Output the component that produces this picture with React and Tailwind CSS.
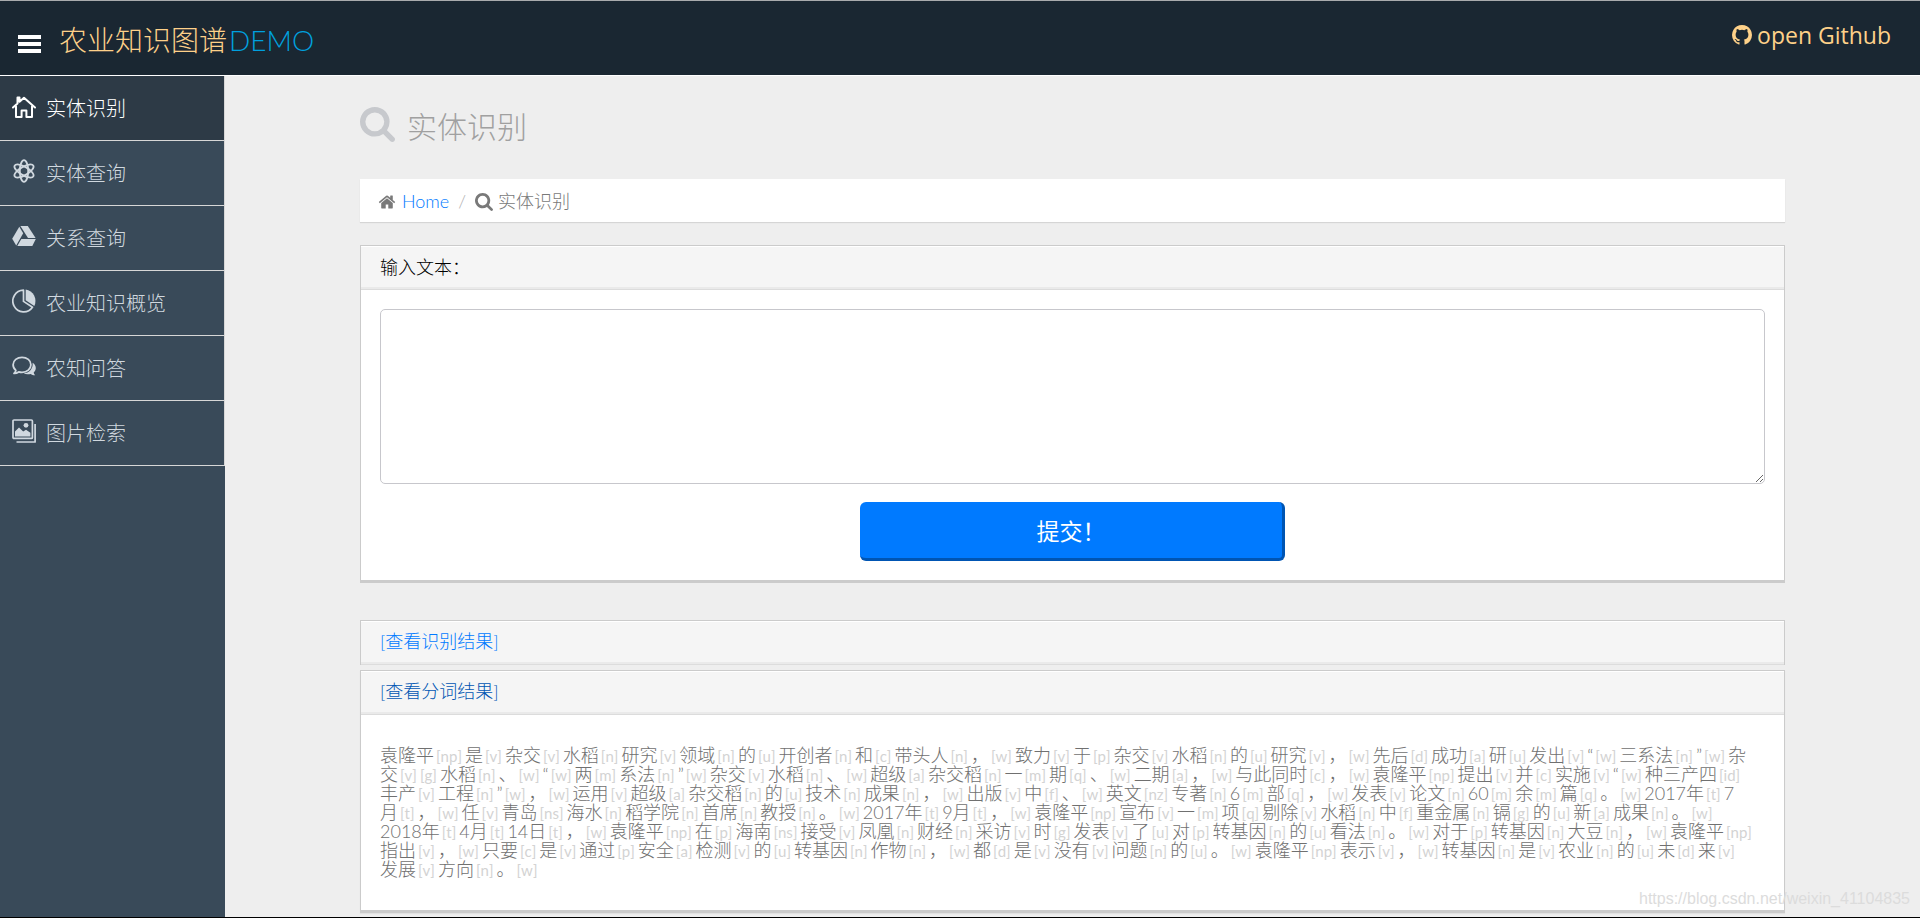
import React from "react";

const HouseIcon = () => (
  <svg viewBox="0 -1 24 24" className="w-6 h-6 -mt-1 shrink-0" fill="none" stroke="currentColor" strokeWidth="2" strokeLinejoin="round" strokeLinecap="round">
    <path d="M1 12.5 5.5 8.6V2.6h2v4.2L12 2.7l11 9.8" />
    <path d="M4 11.5V22h5.6v-6.6h4.8V22H20V11.5" />
  </svg>
);

const AtomIcon = () => (
  <svg viewBox="0 0 24 24" className="w-6 h-6 -mt-1 shrink-0" fill="none" stroke="currentColor" strokeWidth="1.8">
    <ellipse cx="12" cy="12" rx="4.2" ry="10.8" />
    <ellipse cx="12" cy="12" rx="4.2" ry="10.8" transform="rotate(60 12 12)" />
    <ellipse cx="12" cy="12" rx="4.2" ry="10.8" transform="rotate(120 12 12)" />
  </svg>
);

const DriveIcon = () => (
  <svg viewBox="0 0 24 24" className="w-6 h-6 -mt-1 shrink-0" fill="currentColor">
    <path d="M8.400 2h7.400l7.800 12h-7.600z" />
    <path d="M7.300 2.800 11.200 9.200 4.200 21.600.2 14.800z" />
    <path d="M9.300 15h14.500L20.300 22H5.300z" />
  </svg>
);

const PieIcon = () => (
  <svg viewBox="0 0 24 24" className="w-6 h-6 -mt-1 shrink-0">
    <path d="M11.500 1.200a10.800 10.800 0 1 0 9 17L11.500 12.400z" fill="none" stroke="currentColor" strokeWidth="1.7" strokeLinejoin="round" />
    <path d="M13.700.5A11.600 11.600 0 0 1 22.300 17L13.700 11.300z" fill="currentColor" />
  </svg>
);

const ChatIcon = () => (
  <svg viewBox="0 0 24 24" className="w-6 h-6 -mt-1 shrink-0">
    <path d="M10 3.3c-4.8 0-8.9 3.2-8.9 7.4 0 2.4 1.2 4.400 2.800 5.700-.2 1.200-.9 2.200-1.900 3 1.800.1 3.300-.5 4.700-1.500 1 .3 2.100.5 3.300.5 5 0 8.900-3.400 8.900-7.700s-3.900-7.400-8.900-7.400z" fill="none" stroke="currentColor" strokeWidth="1.8" strokeLinejoin="round" />
    <path d="M20.600 8.800c2 1.300 3.200 3.200 3.200 5.300 0 1.800-.8 3.300-2.100 4.500.1 1 .6 1.900 1.500 2.600-1.800.1-3.300-.4-4.600-1.300-2.300.7-4.900.5-7-.4 5.600-.4 9.800-4.800 9-10.700z" fill="currentColor" />
  </svg>
);

const ImagesIcon = () => (
  <svg viewBox="0 0 24 24" className="w-6 h-6 -mt-1 shrink-0" fill="none" stroke="currentColor" strokeWidth="1.7" strokeLinejoin="round">
    <rect x="1" y="1" width="19.400" height="18.400" rx="1" />
    <path d="M23.100 5v18H4.500" />
    <circle cx="14" cy="6.300" r="2.400" fill="currentColor" stroke="none" />
    <path d="M3 12.500 7 8.500l4.200 4 2.800-1.800 4.400 3V17.400H3z" fill="currentColor" stroke="none" />
  </svg>
);

const HomeGlyph = ({ className }) => (
  <svg viewBox="0 0 1792 1792" className={className} fill="currentColor">
    <path d="M1472 992v480q0 26-19 45t-45 19h-384v-384h-256v384h-384q-26 0-45-19t-19-45v-480q0-1 .5-3t.5-3l575-474 575 474q1 2 1 6zm223-69l-62 74q-8 9-21 11h-3q-13 0-21-7l-692-577-692 577q-12 8-24 7-13-2-21-11l-62-74q-8-10-7-23.5t11-21.5l719-599q32-26 76-26t76 26l244 204v-195q0-14 9-23t23-9h192q14 0 23 9t9 23v408l219 182q10 8 11 21.5t-7 23.5z" />
  </svg>
);

const SearchGlyph = ({ className }) => (
  <svg viewBox="64 128 1664 1664" className={className} fill="currentColor">
    <path d="M1216 832q0-185-131.5-316.5t-316.5-131.5-316.5 131.5-131.5 316.5 131.5 316.5 316.5 131.5 316.5-131.5 131.5-316.5zm512 832q0 52-38 90t-90 38q-54 0-90-38l-343-342q-179 124-399 124-143 0-273.5-55.5t-225-150-150-225-55.5-273.5 55.5-273.5 150-225 225-150 273.5-55.5 273.5 55.5 225 150 150 225 55.5 273.5q0 220-124 399l343 343q37 37 37 90z" />
  </svg>
);

const GithubGlyph = ({ className }) => (
  <svg viewBox="128 128 1536 1536" className={className} fill="currentColor">
    <path d="M896 128q209 0 385.5 103t279.5 279.5 103 385.5q0 251-146.5 451.5t-378.5 277.5q-27 5-40-7t-13-30q0-3 .5-76.5t.5-134.5q0-97-52-142 57-6 102.5-18t94-39 81-66.5 53-105 20.5-150.5q0-119-79-206 37-91-8-204-28-9-81 11t-92 44l-38 24q-93-26-192-26t-192 26q-16-11-42.5-27t-83.5-38.5-85-13.5q-45 113-8 204-79 87-79 206 0 85 20.5 150t52.5 105 80.5 67 94 39 102.5 18q-39 36-49 103-21 10-45 15t-57 5-65.5-21.5-55.5-62.5q-19-32-48.5-52t-49.5-24l-20-3q-21 0-29 4.5t-5 11.5 9 14 13 12l7 5q22 10 43.5 38t31.5 51l10 23q13 38 44 61.5t67 30 69.5 7 55.5-3.5l23-4q0 38 .5 88.5t.5 54.5q0 18-13 30t-40 7q-232-77-378.5-277.5t-146.5-451.5q0-209 103-385.5t279.5-279.5 385.5-103z" />
  </svg>
);

const menu = [
  { label: "实体识别", icon: <HouseIcon />, active: true },
  { label: "实体查询", icon: <AtomIcon /> },
  { label: "关系查询", icon: <DriveIcon /> },
  { label: "农业知识概览", icon: <PieIcon /> },
  { label: "农知问答", icon: <ChatIcon /> },
  { label: "图片检索", icon: <ImagesIcon /> },
];

// word/tag pairs, one string per line
const segmented = [
  "袁隆平/np 是/v 杂交/v 水稻/n 研究/v 领域/n 的/u 开创者/n 和/c 带头人/n ，/w 致力/v 于/p 杂交/v 水稻/n 的/u 研究/v ，/w 先后/d 成功/a 研/u 发出/v “/w 三系法/n ”/w 杂",
  "交/v /g 水稻/n 、/w “/w 两/m 系法/n ”/w 杂交/v 水稻/n 、/w 超级/a 杂交稻/n 一/m 期/q 、/w 二期/a ，/w 与此同时/c ，/w 袁隆平/np 提出/v 并/c 实施/v “/w 种三产四/id",
  "丰产/v 工程/n ”/w ，/w 运用/v 超级/a 杂交稻/n 的/u 技术/n 成果/n ，/w 出版/v 中/f 、/w 英文/nz 专著/n 6/m 部/q ，/w 发表/v 论文/n 60/m 余/m 篇/q 。/w 2017年/t 7",
  "月/t ，/w 任/v 青岛/ns 海水/n 稻学院/n 首席/n 教授/n 。/w 2017年/t 9月/t ，/w 袁隆平/np 宣布/v 一/m 项/q 剔除/v 水稻/n 中/f 重金属/n 镉/g 的/u 新/a 成果/n 。/w",
  "2018年/t 4月/t 14日/t ，/w 袁隆平/np 在/p 海南/ns 接受/v 凤凰/n 财经/n 采访/v 时/g 发表/v 了/u 对/p 转基因/n 的/u 看法/n 。/w 对于/p 转基因/n 大豆/n ，/w 袁隆平/np",
  "指出/v ，/w 只要/c 是/v 通过/p 安全/a 检测/v 的/u 转基因/n 作物/n ，/w 都/d 是/v 没有/v 问题/n 的/u 。/w 袁隆平/np 表示/v ，/w 转基因/n 是/v 农业/n 的/u 未/d 来/v",
  "发展/v 方向/n 。/w",
];

const Token = ({ token }) => {
  const [word, tag] = token.split("/");
  return (
    <span className="mr-[3px]">
      {word && <span className="mr-0.5">{word}</span>}
      {tag && <small className="text-[15px] leading-none font-normal text-[#d3d3d3]">[{tag}]</small>}
    </span>
  );
};

const PanelHeader = ({ children }) => (
  <div className="h-11 px-[19px] flex items-center bg-[#f5f5f5] border-b border-[#dcdcdc] shadow-[inset_0_1px_0_#fff,inset_0_-2px_0_#eaeaea]">
    {children}
  </div>
);

const NavBar = () => (
  <header className="h-[76px] px-[18px] flex items-start justify-between bg-[#1a2732] border-t border-t-[#a9abad] border-b border-b-white">
    <div className="flex items-center h-[74px] gap-[18px]">
      <button type="button" aria-label="Toggle navigation" className="mt-3 flex flex-col gap-[3px]">
        <span className="block w-[23px] h-1 bg-white" />
        <span className="block w-[23px] h-1 bg-white" />
        <span className="block w-[23px] h-1 bg-white" />
      </button>
      <a href="#" className="mt-1 flex text-[28px] leading-8 font-light text-[#fed189] whitespace-nowrap">
        农业知识图谱<span className="ml-0.5 text-[#00a0df]">DEMO</span>
      </a>
    </div>
    <a href="#" className="mt-[18px] mr-[11px] flex items-center gap-[5px] text-[23px] leading-8 text-[#fed189] font-['Open_Sans',sans-serif]">
      <GithubGlyph className="w-5 h-5" />
      open Github
    </a>
  </header>
);

const SideBar = () => (
  <aside className="w-[225px] shrink-0 bg-[#394a59]">
    <nav>
      {menu.map((item) => (
        <a
          key={item.label}
          href="#"
          className={
            item.active
              ? "h-[65px] pl-3 flex items-center gap-[10px] border-b border-r border-[#d7d7d7] bg-[#2d3a46] text-white text-xl font-light"
              : "h-[65px] pl-3 flex items-center gap-[10px] border-b border-r border-[#d7d7d7] text-[#d0d8df] text-xl font-light"
          }
        >
          {item.icon}
          {item.label}
        </a>
      ))}
    </nav>
  </aside>
);

export default function App() {
  return (
    <div className="relative min-h-screen flex flex-col bg-[#eeeeee] border-b border-black font-['Lato','Noto_Sans_CJK_SC',sans-serif]">
      <NavBar />
      <div className="flex flex-1">
        <SideBar />
        <main className="flex-1 min-w-0 px-[135px] pb-1">
          <h3 className="h-[103px] pb-[2px] flex items-center gap-3 text-[30px] font-light text-[#a0a0a0]">
            <SearchGlyph className="w-[35px] h-[35px] -mt-1 text-[#c7c9cd]" />
            实体识别
          </h3>

          <ol className="h-[43px] px-[18px] pt-[2px] flex items-center text-[18px] font-light text-[#797979] bg-white shadow-[0_1px_1px_rgba(0,0,0,0.1)]">
            <li className="flex items-center gap-[6px]">
              <HomeGlyph className="w-[18px] h-[18px]" />
              <a href="#" className="text-[#007aff]">Home</a>
            </li>
            <li className="px-[9px] text-[#b0b0b0]">/</li>
            <li className="flex items-center gap-[5px]">
              <SearchGlyph className="w-[18px] h-[18px]" />
              实体识别
            </li>
          </ol>

          <section className="mt-[23px] bg-white border border-b-[3px] border-[#cbcbcb]">
            <PanelHeader>
              <label htmlFor="content" className="text-[18px] font-light text-black">输入文本：</label>
            </PanelHeader>
            <form className="px-[19px] pt-[19px] pb-[19px] flex flex-col items-center gap-[18px]" onSubmit={(e) => e.preventDefault()}>
              <textarea id="content" className="block w-full h-[175px] resize-y rounded-[5px] border border-[#c7c7cc] bg-white" />
              <button type="submit" className="w-[425px] h-[59px] pt-[2px] rounded-md bg-[#007aff] border-r-[3px] border-b-[3px] border-[#0055b3] text-[23px] text-white">
                提交！
              </button>
            </form>
          </section>

          <section className="mt-[37px] border border-b-0 border-[#cbcbcb]">
            <PanelHeader>
              <a href="#" className="mb-[3px] text-[18px] font-light text-[#007aff]">[查看识别结果]</a>
            </PanelHeader>
          </section>

          <section className="mt-[5px] bg-white border border-b-[3px] border-[#cbcbcb] shadow-[0_1px_1px_rgba(0,0,0,0.05)]">
            <PanelHeader>
              <a href="#" className="mb-[3px] text-[18px] font-light text-[#0056b3]">[查看分词结果]</a>
            </PanelHeader>
            <div className="px-[19px] py-[31px] text-[18px] leading-[19px] font-light text-[#707070] whitespace-nowrap">
              {segmented.map((line, i) => (
                <p key={i}>
                  {line.split(" ").map((token, j) => (
                    <Token key={j} token={token} />
                  ))}
                </p>
              ))}
            </div>
          </section>
        </main>
      </div>
      <div className="absolute right-[10px] bottom-2 text-base leading-5 text-[#dcdcdc] font-['Liberation_Sans',sans-serif]">
        https://blog.csdn.net/weixin_41104835
      </div>
    </div>
  );
}
